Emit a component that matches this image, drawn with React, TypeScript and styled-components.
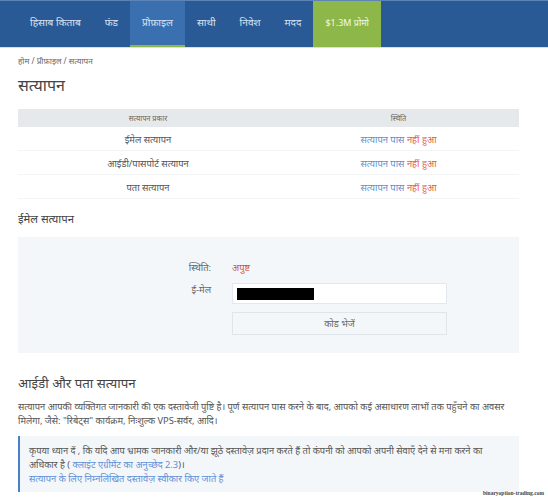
import React from "react";
import styled, { createGlobalStyle } from "styled-components";

const Global = createGlobalStyle`
  html, body { margin: 0; padding: 0; background: #fff; }
  body { font-family: "Noto Sans", "Open Sans", "Liberation Sans", sans-serif; color: #4a4f55; overflow: hidden; }
  * { box-sizing: border-box; }
`;
const Page = styled.div`position: relative; width: 548px; height: 500px; overflow: hidden;`;
const NavBar = styled.nav`display: flex; height: 48px; padding-left: 18px; background: #2a5a96; border-top: 1px solid #5d84b4; border-bottom: 1px solid #d5deea;`;
const NavItem = styled.a<{ $active?: boolean }>`
  display: flex; align-items: center; padding: 0 12px 4px;
  font-size: 10.2px; color: #d7e3f0;
  background: ${p => p.$active ? "#3a70b0" : "transparent"};
  box-shadow: ${p => p.$active ? "inset 0 -2px 0 #8db849" : "none"};
`;
const Promo = styled(NavItem)`background: #8db849; color: #f2f8e6; font-size: 9px;`;
const Main = styled.main`padding: 0 29px 0 18px;`;
const Crumbs = styled.div`font-size: 8.2px; color: #666; margin-top: 6px; line-height: 14px;`;
const Title = styled.h1`font-size: 16px; font-weight: 400; color: #444; margin: 3px 0 0; line-height: 28px;`;
const Table = styled.div`margin-top: 10px;`;
const Head = styled.div`display: grid; grid-template-columns: 260px 1fr; height: 18px; background: #e6e9ec; font-size: 7.4px; color: #666; align-items: center; text-align: center;`;
const Row = styled.div`display: grid; grid-template-columns: 260px 1fr; height: 24px; padding-top: 2px; border-bottom: 1px solid #f2f4f6; font-size: 9.4px; color: #555; align-items: center; text-align: center;`;
const Blue = styled.span`color: #5f8fd6;`;
const Red = styled.span`color: #e8574a;`;
const H2 = styled.h2`font-size: 11.3px; font-weight: 400; color: #444; margin: 10px 0 0; line-height: 20px;`;
const Panel = styled.section`height: 116px; margin-top: 8px; background: #f4f7fa; padding-top: 24px; display: grid; grid-template-columns: 193px 215px; column-gap: 21px; grid-auto-rows: min-content; justify-content: start;`;
const Label = styled.div`font-size: 9.4px; color: #666; text-align: right;`;
const Value = styled.div`font-size: 9.4px; color: #c6584c; height: 22px;`;
const Field = styled.div`display: flex; align-items: center; height: 21px; width: 215px; background: #fff; border: 1px solid #e3e8ee; padding-left: 4px;`;
const Redact = styled.div`width: 77px; height: 12px; background: #000;`;
const Send = styled.button`grid-column: 2; width: 215px; height: 23px; margin-top: 8px; background: #f4f7fa; border: 1px solid #e0e5eb; font: inherit; font-size: 9.4px; color: #666; padding: 0;`;
const H2Big = styled.h2`font-size: 13.3px; font-weight: 400; color: #444; margin: 17px 0 0; line-height: 26px;`;
const Para = styled.p`font-size: 9.3px; line-height: 14px; margin: 4px 0 0; color: #555;`;
const Note = styled.aside`margin-top: 8px; height: 56px; background: #f4f7fa; border-left: 2px solid #4a80c8; padding: 8px 8px 0 9px; font-size: 9.3px; line-height: 14px; color: #555;`;
const A = styled.a`display: inline-block; color: #5f8fd6;`;
const Mark = styled.div`position: absolute; right: 4px; bottom: 4px; font-size: 5.5px; font-weight: 700; color: #444; font-family: "Liberation Serif", serif;`;

const rows = ["ईमेल सत्यापन", "आईडी/पासपोर्ट सत्यापन", "पता सत्यापन"];
const nav = ["हिसाब किताब", "फंड", "प्रोफ़ाइल", "साथी", "निवेश", "मदद"];

export default function App() {
  return (
    <Page>
      <Global />
      <NavBar>
        {nav.map((n, i) => <NavItem key={n} $active={i === 2}>{n}</NavItem>)}
        <Promo>$1.3M प्रोमो</Promo>
      </NavBar>
      <Main>
        <Crumbs>होम / प्रोफ़ाइल / सत्यापन</Crumbs>
        <Title>सत्यापन</Title>
        <Table>
          <Head><div>सत्यापन प्रकार</div><div>स्थिति</div></Head>
          {rows.map(r => (
            <Row key={r}><div>{r}</div><div><Blue>सत्यापन पास </Blue><Red>नहीं हुआ</Red></div></Row>
          ))}
        </Table>
        <H2>ईमेल सत्यापन</H2>
        <Panel>
          <Label>स्थिति:</Label><Value>अपुष्ट</Value>
          <Label>ई-मेल</Label><Field><Redact /></Field>
          <Send>कोड भेजें</Send>
        </Panel>
        <H2Big>आईडी और पता सत्यापन</H2Big>
        <Para>सत्यापन आपकी व्यक्तिगत जानकारी की एक दस्तावेजी पुष्टि है। पूर्ण सत्यापन पास करने के बाद, आपको कई असाधारण लाभों तक पहुँचने का अवसर मिलेगा, जैसे: "रिबेट्स" कार्यक्रम, निःशुल्क VPS-सर्वर, आदि।</Para>
        <Note>
          कृपया ध्यान दें , कि यदि आप भ्रामक जानकारी और/या झूठे दस्तावेज़ प्रदान करते हैं तो कंपनी को आपको अपनी सेवाएँ देने से मना करने का अधिकार है ( <A>क्लाइंट एग्रीमेंट का अनुच्छेद 2.3</A>)।<br />
          <A>सत्यापन के लिए निम्नलिखित दस्तावेज़ स्वीकार किए जाते हैं</A>
        </Note>
      </Main>
      <Mark>binaryoption-trading.com</Mark>
    </Page>
  );
}
